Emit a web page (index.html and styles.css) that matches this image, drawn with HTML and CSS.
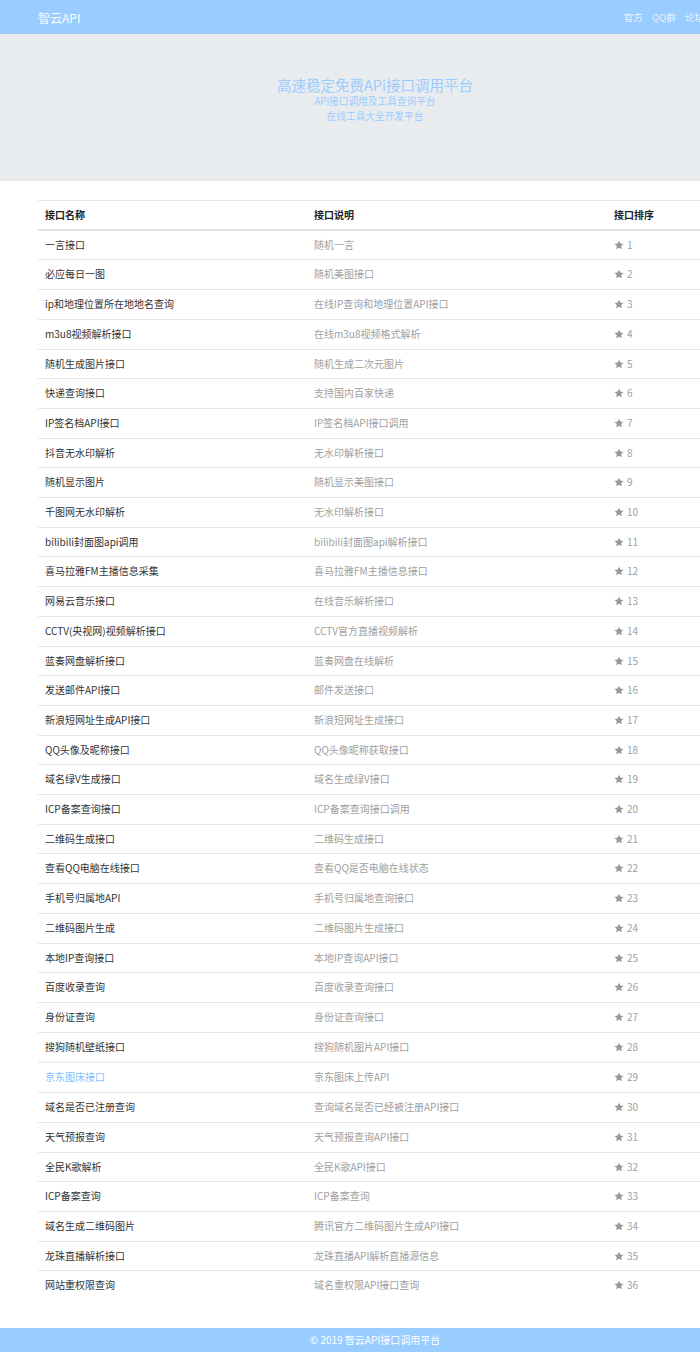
FILE: index.html
```html
<!DOCTYPE html>
<html lang="zh-CN">
<head>
<meta charset="utf-8">
<title>智云API</title>
<link rel="stylesheet" href="styles.css">
</head>
<body>
<div class="page">
  <header class="navbar">
    <a class="brand" href="#">智云API</a>
    <nav class="nav">
      <a href="#">官方</a>
      <a href="#">QQ群</a>
      <a href="#">论坛</a>
    </nav>
  </header>
  <section class="hero">
    <h1>高速稳定免费APi接口调用平台</h1>
    <p>APi接口调用及工具查询平台</p>
    <p>在线工具大全开发平台</p>
  </section>
  <main class="content">
    <table class="api-table">
      <colgroup><col class="c1"><col class="c2"><col class="c3"></colgroup>
      <thead>
        <tr><th>接口名称</th><th>接口说明</th><th>接口排序</th></tr>
      </thead>
      <tbody id="rows">
        <tr><td>一言接口</td><td class="desc">随机一言</td><td class="rank"><svg class="star" viewBox="0 0 24 24"><path d="M12 1.5l3.3 6.9 7.5.9-5.5 5.2 1.4 7.5L12 18.3 5.3 22l1.4-7.5L1.2 9.3l7.5-.9z"/></svg>1</td></tr>
        <tr><td>必应每日一图</td><td class="desc">随机美图接口</td><td class="rank"><svg class="star" viewBox="0 0 24 24"><path d="M12 1.5l3.3 6.9 7.5.9-5.5 5.2 1.4 7.5L12 18.3 5.3 22l1.4-7.5L1.2 9.3l7.5-.9z"/></svg>2</td></tr>
        <tr><td>ip和地理位置所在地地名查询</td><td class="desc">在线IP查询和地理位置API接口</td><td class="rank"><svg class="star" viewBox="0 0 24 24"><path d="M12 1.5l3.3 6.9 7.5.9-5.5 5.2 1.4 7.5L12 18.3 5.3 22l1.4-7.5L1.2 9.3l7.5-.9z"/></svg>3</td></tr>
        <tr><td>m3u8视频解析接口</td><td class="desc">在线m3u8视频格式解析</td><td class="rank"><svg class="star" viewBox="0 0 24 24"><path d="M12 1.5l3.3 6.9 7.5.9-5.5 5.2 1.4 7.5L12 18.3 5.3 22l1.4-7.5L1.2 9.3l7.5-.9z"/></svg>4</td></tr>
        <tr><td>随机生成图片接口</td><td class="desc">随机生成二次元图片</td><td class="rank"><svg class="star" viewBox="0 0 24 24"><path d="M12 1.5l3.3 6.9 7.5.9-5.5 5.2 1.4 7.5L12 18.3 5.3 22l1.4-7.5L1.2 9.3l7.5-.9z"/></svg>5</td></tr>
        <tr><td>快递查询接口</td><td class="desc">支持国内百家快递</td><td class="rank"><svg class="star" viewBox="0 0 24 24"><path d="M12 1.5l3.3 6.9 7.5.9-5.5 5.2 1.4 7.5L12 18.3 5.3 22l1.4-7.5L1.2 9.3l7.5-.9z"/></svg>6</td></tr>
        <tr><td>IP签名档API接口</td><td class="desc">IP签名档API接口调用</td><td class="rank"><svg class="star" viewBox="0 0 24 24"><path d="M12 1.5l3.3 6.9 7.5.9-5.5 5.2 1.4 7.5L12 18.3 5.3 22l1.4-7.5L1.2 9.3l7.5-.9z"/></svg>7</td></tr>
        <tr><td>抖音无水印解析</td><td class="desc">无水印解析接口</td><td class="rank"><svg class="star" viewBox="0 0 24 24"><path d="M12 1.5l3.3 6.9 7.5.9-5.5 5.2 1.4 7.5L12 18.3 5.3 22l1.4-7.5L1.2 9.3l7.5-.9z"/></svg>8</td></tr>
        <tr><td>随机显示图片</td><td class="desc">随机显示美图接口</td><td class="rank"><svg class="star" viewBox="0 0 24 24"><path d="M12 1.5l3.3 6.9 7.5.9-5.5 5.2 1.4 7.5L12 18.3 5.3 22l1.4-7.5L1.2 9.3l7.5-.9z"/></svg>9</td></tr>
        <tr><td>千图网无水印解析</td><td class="desc">无水印解析接口</td><td class="rank"><svg class="star" viewBox="0 0 24 24"><path d="M12 1.5l3.3 6.9 7.5.9-5.5 5.2 1.4 7.5L12 18.3 5.3 22l1.4-7.5L1.2 9.3l7.5-.9z"/></svg>10</td></tr>
        <tr><td>bilibili封面图api调用</td><td class="desc">bilibili封面图api解析接口</td><td class="rank"><svg class="star" viewBox="0 0 24 24"><path d="M12 1.5l3.3 6.9 7.5.9-5.5 5.2 1.4 7.5L12 18.3 5.3 22l1.4-7.5L1.2 9.3l7.5-.9z"/></svg>11</td></tr>
        <tr><td>喜马拉雅FM主播信息采集</td><td class="desc">喜马拉雅FM主播信息接口</td><td class="rank"><svg class="star" viewBox="0 0 24 24"><path d="M12 1.5l3.3 6.9 7.5.9-5.5 5.2 1.4 7.5L12 18.3 5.3 22l1.4-7.5L1.2 9.3l7.5-.9z"/></svg>12</td></tr>
        <tr><td>网易云音乐接口</td><td class="desc">在线音乐解析接口</td><td class="rank"><svg class="star" viewBox="0 0 24 24"><path d="M12 1.5l3.3 6.9 7.5.9-5.5 5.2 1.4 7.5L12 18.3 5.3 22l1.4-7.5L1.2 9.3l7.5-.9z"/></svg>13</td></tr>
        <tr><td>CCTV(央视网)视频解析接口</td><td class="desc">CCTV官方直播视频解析</td><td class="rank"><svg class="star" viewBox="0 0 24 24"><path d="M12 1.5l3.3 6.9 7.5.9-5.5 5.2 1.4 7.5L12 18.3 5.3 22l1.4-7.5L1.2 9.3l7.5-.9z"/></svg>14</td></tr>
        <tr><td>蓝奏网盘解析接口</td><td class="desc">蓝奏网盘在线解析</td><td class="rank"><svg class="star" viewBox="0 0 24 24"><path d="M12 1.5l3.3 6.9 7.5.9-5.5 5.2 1.4 7.5L12 18.3 5.3 22l1.4-7.5L1.2 9.3l7.5-.9z"/></svg>15</td></tr>
        <tr><td>发送邮件API接口</td><td class="desc">邮件发送接口</td><td class="rank"><svg class="star" viewBox="0 0 24 24"><path d="M12 1.5l3.3 6.9 7.5.9-5.5 5.2 1.4 7.5L12 18.3 5.3 22l1.4-7.5L1.2 9.3l7.5-.9z"/></svg>16</td></tr>
        <tr><td>新浪短网址生成API接口</td><td class="desc">新浪短网址生成接口</td><td class="rank"><svg class="star" viewBox="0 0 24 24"><path d="M12 1.5l3.3 6.9 7.5.9-5.5 5.2 1.4 7.5L12 18.3 5.3 22l1.4-7.5L1.2 9.3l7.5-.9z"/></svg>17</td></tr>
        <tr><td>QQ头像及昵称接口</td><td class="desc">QQ头像昵称获取接口</td><td class="rank"><svg class="star" viewBox="0 0 24 24"><path d="M12 1.5l3.3 6.9 7.5.9-5.5 5.2 1.4 7.5L12 18.3 5.3 22l1.4-7.5L1.2 9.3l7.5-.9z"/></svg>18</td></tr>
        <tr><td>域名绿V生成接口</td><td class="desc">域名生成绿V接口</td><td class="rank"><svg class="star" viewBox="0 0 24 24"><path d="M12 1.5l3.3 6.9 7.5.9-5.5 5.2 1.4 7.5L12 18.3 5.3 22l1.4-7.5L1.2 9.3l7.5-.9z"/></svg>19</td></tr>
        <tr><td>ICP备案查询接口</td><td class="desc">ICP备案查询接口调用</td><td class="rank"><svg class="star" viewBox="0 0 24 24"><path d="M12 1.5l3.3 6.9 7.5.9-5.5 5.2 1.4 7.5L12 18.3 5.3 22l1.4-7.5L1.2 9.3l7.5-.9z"/></svg>20</td></tr>
        <tr><td>二维码生成接口</td><td class="desc">二维码生成接口</td><td class="rank"><svg class="star" viewBox="0 0 24 24"><path d="M12 1.5l3.3 6.9 7.5.9-5.5 5.2 1.4 7.5L12 18.3 5.3 22l1.4-7.5L1.2 9.3l7.5-.9z"/></svg>21</td></tr>
        <tr><td>查看QQ电脑在线接口</td><td class="desc">查看QQ是否电脑在线状态</td><td class="rank"><svg class="star" viewBox="0 0 24 24"><path d="M12 1.5l3.3 6.9 7.5.9-5.5 5.2 1.4 7.5L12 18.3 5.3 22l1.4-7.5L1.2 9.3l7.5-.9z"/></svg>22</td></tr>
        <tr><td>手机号归属地API</td><td class="desc">手机号归属地查询接口</td><td class="rank"><svg class="star" viewBox="0 0 24 24"><path d="M12 1.5l3.3 6.9 7.5.9-5.5 5.2 1.4 7.5L12 18.3 5.3 22l1.4-7.5L1.2 9.3l7.5-.9z"/></svg>23</td></tr>
        <tr><td>二维码图片生成</td><td class="desc">二维码图片生成接口</td><td class="rank"><svg class="star" viewBox="0 0 24 24"><path d="M12 1.5l3.3 6.9 7.5.9-5.5 5.2 1.4 7.5L12 18.3 5.3 22l1.4-7.5L1.2 9.3l7.5-.9z"/></svg>24</td></tr>
        <tr><td>本地IP查询接口</td><td class="desc">本地IP查询API接口</td><td class="rank"><svg class="star" viewBox="0 0 24 24"><path d="M12 1.5l3.3 6.9 7.5.9-5.5 5.2 1.4 7.5L12 18.3 5.3 22l1.4-7.5L1.2 9.3l7.5-.9z"/></svg>25</td></tr>
        <tr><td>百度收录查询</td><td class="desc">百度收录查询接口</td><td class="rank"><svg class="star" viewBox="0 0 24 24"><path d="M12 1.5l3.3 6.9 7.5.9-5.5 5.2 1.4 7.5L12 18.3 5.3 22l1.4-7.5L1.2 9.3l7.5-.9z"/></svg>26</td></tr>
        <tr><td>身份证查询</td><td class="desc">身份证查询接口</td><td class="rank"><svg class="star" viewBox="0 0 24 24"><path d="M12 1.5l3.3 6.9 7.5.9-5.5 5.2 1.4 7.5L12 18.3 5.3 22l1.4-7.5L1.2 9.3l7.5-.9z"/></svg>27</td></tr>
        <tr><td>搜狗随机壁纸接口</td><td class="desc">搜狗随机图片API接口</td><td class="rank"><svg class="star" viewBox="0 0 24 24"><path d="M12 1.5l3.3 6.9 7.5.9-5.5 5.2 1.4 7.5L12 18.3 5.3 22l1.4-7.5L1.2 9.3l7.5-.9z"/></svg>28</td></tr>
        <tr class="active"><td><a href="#">京东图床接口</a></td><td class="desc">京东图床上传API</td><td class="rank"><svg class="star" viewBox="0 0 24 24"><path d="M12 1.5l3.3 6.9 7.5.9-5.5 5.2 1.4 7.5L12 18.3 5.3 22l1.4-7.5L1.2 9.3l7.5-.9z"/></svg>29</td></tr>
        <tr><td>域名是否已注册查询</td><td class="desc">查询域名是否已经被注册API接口</td><td class="rank"><svg class="star" viewBox="0 0 24 24"><path d="M12 1.5l3.3 6.9 7.5.9-5.5 5.2 1.4 7.5L12 18.3 5.3 22l1.4-7.5L1.2 9.3l7.5-.9z"/></svg>30</td></tr>
        <tr><td>天气预报查询</td><td class="desc">天气预报查询API接口</td><td class="rank"><svg class="star" viewBox="0 0 24 24"><path d="M12 1.5l3.3 6.9 7.5.9-5.5 5.2 1.4 7.5L12 18.3 5.3 22l1.4-7.5L1.2 9.3l7.5-.9z"/></svg>31</td></tr>
        <tr><td>全民K歌解析</td><td class="desc">全民K歌API接口</td><td class="rank"><svg class="star" viewBox="0 0 24 24"><path d="M12 1.5l3.3 6.9 7.5.9-5.5 5.2 1.4 7.5L12 18.3 5.3 22l1.4-7.5L1.2 9.3l7.5-.9z"/></svg>32</td></tr>
        <tr><td>ICP备案查询</td><td class="desc">ICP备案查询</td><td class="rank"><svg class="star" viewBox="0 0 24 24"><path d="M12 1.5l3.3 6.9 7.5.9-5.5 5.2 1.4 7.5L12 18.3 5.3 22l1.4-7.5L1.2 9.3l7.5-.9z"/></svg>33</td></tr>
        <tr><td>域名生成二维码图片</td><td class="desc">腾讯官方二维码图片生成API接口</td><td class="rank"><svg class="star" viewBox="0 0 24 24"><path d="M12 1.5l3.3 6.9 7.5.9-5.5 5.2 1.4 7.5L12 18.3 5.3 22l1.4-7.5L1.2 9.3l7.5-.9z"/></svg>34</td></tr>
        <tr><td>龙珠直播解析接口</td><td class="desc">龙珠直播API解析直播源信息</td><td class="rank"><svg class="star" viewBox="0 0 24 24"><path d="M12 1.5l3.3 6.9 7.5.9-5.5 5.2 1.4 7.5L12 18.3 5.3 22l1.4-7.5L1.2 9.3l7.5-.9z"/></svg>35</td></tr>
        <tr><td>网站重权限查询</td><td class="desc">域名重权限API接口查询</td><td class="rank"><svg class="star" viewBox="0 0 24 24"><path d="M12 1.5l3.3 6.9 7.5.9-5.5 5.2 1.4 7.5L12 18.3 5.3 22l1.4-7.5L1.2 9.3l7.5-.9z"/></svg>36</td></tr>
      </tbody>
    </table>
  </main>
  <footer class="footer">© 2019 智云API接口调用平台</footer>
</div>
</body>
</html>
```

FILE: styles.css
```css
html, body {
  margin: 0;
  padding: 0;
  overflow: hidden;
  background: #fff;
}
body {
  font-family: "Noto Sans CJK SC", "Liberation Sans", sans-serif;
  font-size: 10px;
  color: #333;
}
.page {
  width: 750px;
}
a {
  text-decoration: none;
}
.navbar {
  height: 34px;
  background: #99ccff;
  display: flex;
  align-items: center;
  justify-content: space-between;
  padding: 0 38px;
}
.brand {
  color: #fff;
  font-size: 12px;
  opacity: 0.95;
}
.nav {
  display: flex;
  gap: 9px;
  padding-right: 8px;
}
.nav a {
  color: #e8f3ff;
  font-size: 9.6px;
}
.hero {
  height: 147px;
  background: #e9ecef;
  display: flex;
  flex-direction: column;
  align-items: center;
  justify-content: flex-start;
  color: #99ccff;
  padding-top: 42px;
  box-sizing: border-box;
}
.hero h1 {
  margin: 0;
  font-size: 14.5px;
  font-weight: normal;
  line-height: 18px;
}
.hero p {
  margin: 0;
  font-size: 9.7px;
  line-height: 15px;
}
.content {
  padding: 19px 38px 28px;
}
.api-table {
  width: 674px;
  border-collapse: collapse;
  table-layout: fixed;
}
.c1 { width: 269px; }
.c2 { width: 300px; }
.c3 { width: 105px; }
.api-table th,
.api-table td {
  text-align: left;
  padding: 7px 7px;
  line-height: 14.7px;
  border-top: 1px solid #e6e6e6;
  white-space: nowrap;
  font-size: 10px;
}
.api-table th {
  font-weight: bold;
  color: #222;
  border-bottom: 2px solid #e0e3ea;
  padding-bottom: 6px;
}
.api-table tbody tr:first-child td {
  border-top: 0;
}
.api-table td.desc,
.api-table td.rank {
  color: #a0a0a0;
}
.api-table tr.active td {
  border-top: 2px solid #f0f0f0;
}
.api-table tr.active a {
  color: #7fbfff;
}
.star {
  width: 10px;
  height: 10px;
  fill: #999;
  margin-right: 3px;
  vertical-align: -1px;
}
.footer {
  height: 24px;
  line-height: 24px;
  background: #99ccff;
  color: #fff;
  text-align: center;
  font-size: 10px;
}
```
